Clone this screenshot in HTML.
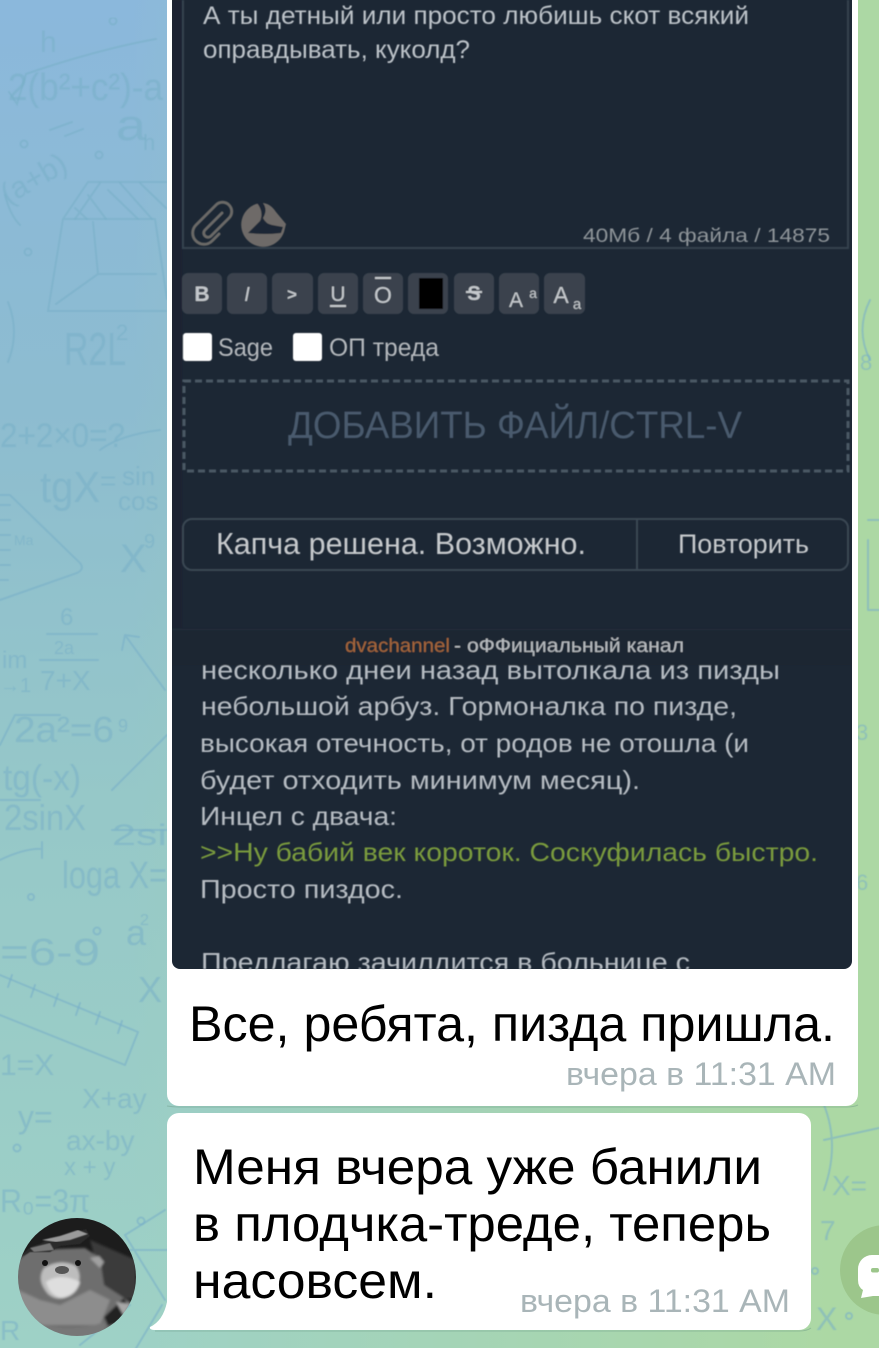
<!DOCTYPE html>
<html><head><meta charset="utf-8"><style>
html,body{margin:0;padding:0;width:879px;height:1348px;overflow:hidden;background:#97c8c8}
svg{display:block}
text{font-family:"Liberation Sans",sans-serif}
</style></head><body>
<svg width="879" height="1348" viewBox="0 0 879 1348" xmlns="http://www.w3.org/2000/svg">
<defs>
<linearGradient id="v" x1="0" y1="0" x2="0" y2="1"><stop offset="0" stop-color="#8bb8dc"/><stop offset=".3" stop-color="#8dbcd0"/><stop offset=".6" stop-color="#96c8c8"/><stop offset="1" stop-color="#9ed1c6"/></linearGradient>
<linearGradient id="h" x1="0" y1="0" x2="1" y2="0"><stop offset=".15" stop-color="#acd8a4" stop-opacity="0"/><stop offset=".95" stop-color="#acd8a4"/></linearGradient>
<filter id="b" x="0" y="0" width="1" height="1"><feGaussianBlur stdDeviation=".55"/></filter>
<filter id="s" x="-10%" y="-10%" width="120%" height="120%"><feGaussianBlur stdDeviation="1.4"/></filter>
<clipPath id="c1"><rect x="172" y="665" width="680" height="304"/></clipPath>
<clipPath id="av"><circle cx="77" cy="1277" r="59"/></clipPath>
</defs>
<rect width="879" height="1348" fill="url(#v)"/>
<rect width="879" height="1348" fill="url(#h)"/>

<g fill="none" stroke="#78afc8" stroke-width="2" stroke-linecap="round" stroke-opacity=".6" filter="url(#b)">
<path d="M9 92l8 12 9-30c40-14 90-28 130-35"/>
<path d="M63 219l-15 92h118M88 182l-25 37M155 219l12 80M88 182h78M63 219h92M93 222l5 52 58 0M98 274l-42 30"/>
<path d="M100 183l-25 36M120 183l32 36M140 183l26 25M108 190l30 29M88 195l18 24M75 208l12 11"/>
<path d="M8 302q12 30 0 60M5 195q5 20 15 30M50 130l22-8M65 136l18-7"/>
<path d="M10 495l70 68q5 6-3 10L0 600M10 495h-10M0 505h10M0 520h10M0 535h10M0 550h10M0 565h10M0 580h8"/>
<path d="M100 450q20-15 60-20M47 634h50M40 660h58M125 635l40 55M125 635l-3 15M125 635l14 2M0 745l15-30h45M0 800h40M112 830h55M112 790l55-55"/>
<path d="M0 860q25-12 42-11M42 842v16M0 975l138 57-13 33L0 1015"/>
<path d="M12 975l-4 12M35 985l-4 12M58 994l-4 12M80 1003l-4 12M100 1012l-4 12M122 1021l-4 12"/>
<path d="M132 1355l30-50M165 1300l-40-65 40-25M130 1250h40M125 1250l-45-30M80 1345l50-40"/>
<circle cx="113" cy="21" r="3.500"/><circle cx="24" cy="144" r="3.500"/><circle cx="99" cy="155" r="3.500"/><circle cx="28" cy="252" r="3.500"/><circle cx="31" cy="897" r="3"/><circle cx="97" cy="931" r="3.500"/><circle cx="17" cy="1148" r="3.500"/><circle cx="141" cy="1221" r="3.500"/>
<path d="M870 300q-15 30 0 60M824 1105q16 40 0 85M824 1140l55-12M868 520h11M868 540v70M868 610h11M860 1250l10-15"/>
<circle cx="815" cy="1271" r="3"/><circle cx="849" cy="1316" r="3"/>
</g>
<g fill="#79afc6" fill-opacity=".55" filter="url(#b)">
<text x="40" y="52" font-size="30">h</text>
<text x="8" y="100" font-size="38" textLength="155" lengthAdjust="spacingAndGlyphs">2(b²+c²)-a</text>
<text x="116" y="140" font-size="44" textLength="30" lengthAdjust="spacingAndGlyphs">a</text><text x="143" y="150" font-size="22">h</text>
<text x="8" y="205" font-size="30" transform="rotate(-30 8 205)">(a+b)</text>
<text x="64" y="365" font-size="46" textLength="62" lengthAdjust="spacingAndGlyphs">R2L</text><text x="116" y="340" font-size="22">2</text>
<text x="0" y="447" font-size="34" textLength="125" lengthAdjust="spacingAndGlyphs">2+2×0=?</text>
<text x="40" y="502" font-size="44" textLength="60" lengthAdjust="spacingAndGlyphs">tgX</text><text x="100" y="490" font-size="28">=</text>
<text x="122" y="485" font-size="26">sin</text><text x="118" y="510" font-size="26">cos</text>
<text x="14" y="545" font-size="14">Ma</text><text x="120" y="572" font-size="40">X</text><text x="144" y="548" font-size="20">9</text>
<text x="60" y="625" font-size="24">6</text><text x="54" y="654" font-size="18">2a</text><text x="40" y="690" font-size="28">7+X</text>
<text x="2" y="668" font-size="24">im</text><text x="0" y="692" font-size="20">→1</text>
<text x="14" y="742" font-size="36" textLength="100" lengthAdjust="spacingAndGlyphs">2a²=6</text><text x="118" y="732" font-size="18">9</text>
<text x="3" y="790" font-size="36" textLength="78" lengthAdjust="spacingAndGlyphs">tg(-x)</text>
<text x="4" y="830" font-size="36" textLength="82" lengthAdjust="spacingAndGlyphs">2sinX</text><text x="112" y="845" font-size="30" textLength="55" lengthAdjust="spacingAndGlyphs">2si</text>
<text x="62" y="888" font-size="38" textLength="105" lengthAdjust="spacingAndGlyphs">loga X=</text>
<text x="0" y="965" font-size="38" textLength="100" lengthAdjust="spacingAndGlyphs">=6-9</text><text x="126" y="945" font-size="36">a</text><text x="140" y="925" font-size="16">2</text>
<text x="138" y="1002" font-size="36">X</text><text x="0" y="1075" font-size="30">1=X</text>
<text x="18" y="1128" font-size="32">y=</text><text x="82" y="1108" font-size="28">X+ay</text><text x="66" y="1150" font-size="28">ax-by</text><text x="64" y="1175" font-size="24">x + y</text>
<text x="0" y="1212" font-size="32" textLength="90" lengthAdjust="spacingAndGlyphs">R₀=3π</text><text x="0" y="1340" font-size="28">R</text>
<text x="860" y="370" font-size="22">8</text><text x="856" y="740" font-size="22">3</text><text x="856" y="890" font-size="22">6</text><text x="832" y="1195" font-size="28">X=</text><text x="820" y="1240" font-size="28">7</text><text x="816" y="1330" font-size="32">X</text>
</g>

<!-- bubbles -->
<path d="M167 0H858V1094a12 12 0 0 1-12 12H179a12 12 0 0 1-12-12Z" fill="#fff"/>
<path d="M179 1113H799a12 12 0 0 1 12 12V1318a12 12 0 0 1-12 12H155q-6 0-5-3 13-6 17-25V1125a12 12 0 0 1 12-12Z" fill="#fff"/>
<path d="M167 1106q6 1 12 1H846q8 0 12-2" fill="none" stroke="#6b9a85" stroke-opacity=".45" stroke-width="1"/>
<path d="M155 1331H799q8 0 12-3" fill="none" stroke="#6b9a85" stroke-opacity=".45" stroke-width="1"/>

<!-- dark panel -->
<path d="M172 0H852V961a8 8 0 0 1-8 8H180a8 8 0 0 1-8-8Z" fill="#1c2734"/>
<g filter="url(#b)">
<rect x="172" y="0" width="10" height="660" fill="#1a2430"/>
<rect x="172" y="628" width="680" height="37" fill="#1b2633"/>
<rect x="172" y="629" width="680" height="1" fill="#212d3a"/>
<path d="M183 0V248H848V0" fill="none" stroke="#34434f" stroke-width="2"/>
<text x="203" y="24" font-size="25" fill="#bcc2c8" textLength="546" lengthAdjust="spacingAndGlyphs">А ты детный или просто любишь скот всякий</text>
<text x="203" y="58" font-size="25" fill="#bcc2c8" textLength="267" lengthAdjust="spacingAndGlyphs">оправдывать, куколд?</text>
<text x="583" y="242" font-size="19" fill="#8e9499" textLength="247" lengthAdjust="spacingAndGlyphs">40Мб / 4 файла / 14875</text>

<!-- clip icon -->
<path d="M222 213L205 230a4 4 0 0 0 6 6L229 218a9 9 0 0 0-13-13L196 225a11 11 0 0 0 16 16L219 234" fill="none" stroke="#6a6966" stroke-width="3" stroke-linecap="round"/>
<!-- sticker icon -->
<path d="M262 203Q270 203 276 212L286 224 284 232A22 22 0 1 1 256 204Z" fill="#6e6a67"/>
<path d="M248 233L263 218Q266 224 272 225L283 227 281 233Q265 235 248 233Z" fill="#1c2734"/>
<path d="M257 203Q264 212 260 221L263 218Q268 210 263 203Z" fill="#1c2734"/>

<!-- toolbar -->
<g fill="#3a434d">
<rect x="182" y="273" width="40" height="41" rx="6"/><rect x="227" y="273" width="40" height="41" rx="6"/><rect x="272" y="273" width="41" height="41" rx="6"/><rect x="318" y="273" width="40" height="41" rx="6"/><rect x="363" y="273" width="40" height="41" rx="6"/><rect x="408" y="273" width="40" height="41" rx="6"/><rect x="454" y="273" width="40" height="41" rx="6"/><rect x="499" y="273" width="40" height="41" rx="6"/><rect x="544" y="273" width="41" height="41" rx="6"/>
</g>
<rect x="419" y="278" width="24" height="31" fill="#000"/>
<g fill="#c4c8cc" text-anchor="middle">
<text x="202" y="301" font-size="21" font-weight="700">B</text>
<text x="247" y="301" font-size="20" font-style="italic">I</text>
<text x="292" y="300" font-size="17" font-weight="700">&gt;</text>
<text x="338" y="301" font-size="21">U</text><rect x="330" y="305" width="16" height="2"/>
<text x="383" y="303" font-size="23">O</text><rect x="375" y="277" width="16" height="2"/>
<text x="474" y="300" font-size="20" font-weight="700">S</text><rect x="466" y="291" width="16" height="2"/>
<text x="516" y="307" font-size="21">A</text><text x="533" y="298" font-size="14">a</text>
<text x="561" y="303" font-size="23">A</text><text x="577" y="309" font-size="15">a</text>
</g>
<rect x="183" y="333" width="29" height="28" rx="3" fill="#fff"/>
<rect x="293" y="333" width="29" height="28" rx="3" fill="#fff"/>
<text x="218" y="356" font-size="25" fill="#b4b8bc" textLength="55" lengthAdjust="spacingAndGlyphs">Sage</text>
<text x="329" y="356" font-size="25" fill="#b4b8bc" textLength="110" lengthAdjust="spacingAndGlyphs">ОП треда</text>

<!-- dropzone -->
<rect x="184" y="381" width="664" height="90" fill="none" stroke="#4b5865" stroke-width="3" stroke-dasharray="7 4"/>
<text x="288" y="438" font-size="38" fill="#4a5a6d" textLength="454" lengthAdjust="spacingAndGlyphs">ДОБАВИТЬ ФАЙЛ/CTRL-V</text>

<!-- captcha -->
<rect x="183" y="519" width="665" height="51" rx="9" fill="none" stroke="#3a4753" stroke-width="2"/>
<rect x="636" y="519" width="2" height="51" fill="#3a4753"/>
<text x="216" y="554" font-size="31" fill="#c6c9cc" textLength="370" lengthAdjust="spacingAndGlyphs">Капча решена. Возможно.</text>
<text x="678" y="553" font-size="27" fill="#c6c9cc" textLength="131" lengthAdjust="spacingAndGlyphs">Повторить</text>

<!-- channel -->
<text x="345" y="652" font-size="19" fill="#a5663a" textLength="105" lengthAdjust="spacingAndGlyphs">dvachannel</text>
<text x="454" y="652" font-size="19" fill="#b8bcc0" textLength="230" lengthAdjust="spacingAndGlyphs">- оФФициальный канал</text>

<g clip-path="url(#c1)" font-size="26" fill="#b6bcc2">
<text x="201" y="679" textLength="579" lengthAdjust="spacingAndGlyphs">несколько дней назад вытолкала из пизды</text>
<text x="201" y="715" textLength="536" lengthAdjust="spacingAndGlyphs">небольшой арбуз. Гормоналка по пизде,</text>
<text x="200" y="752" textLength="549" lengthAdjust="spacingAndGlyphs">высокая отечность, от родов не отошла (и</text>
<text x="200" y="789" textLength="440" lengthAdjust="spacingAndGlyphs">будет отходить минимум месяц).</text>
<text x="200" y="825" textLength="197" lengthAdjust="spacingAndGlyphs">Инцел с двача:</text>
<text x="200" y="861" fill="#7a9b3c" textLength="618" lengthAdjust="spacingAndGlyphs">&gt;&gt;Ну бабий век короток. Соскуфилась быстро.</text>
<text x="200" y="898" textLength="203" lengthAdjust="spacingAndGlyphs">Просто пиздос.</text>
<text x="201" y="971" textLength="489" lengthAdjust="spacingAndGlyphs">Предлагаю зачилдится в больнице с</text>
</g>
</g>

<!-- white bubble text -->
<text x="189" y="1041" font-size="50" fill="#000" textLength="646" lengthAdjust="spacingAndGlyphs">Все, ребята, пизда пришла.</text>
<text x="566" y="1085" font-size="32" fill="#a9b5b8" textLength="270" lengthAdjust="spacingAndGlyphs">вчера в 11:31 AM</text>
<text x="193" y="1184" font-size="50" fill="#000" textLength="569" lengthAdjust="spacingAndGlyphs">Меня вчера уже банили</text>
<text x="193" y="1241" font-size="50" fill="#000" textLength="578" lengthAdjust="spacingAndGlyphs">в плодчка-треде, теперь</text>
<text x="193" y="1298" font-size="50" fill="#000" textLength="244" lengthAdjust="spacingAndGlyphs">насовсем.</text>
<text x="520" y="1312" font-size="32" fill="#a9b5b8" textLength="270" lengthAdjust="spacingAndGlyphs">вчера в 11:31 AM</text>

<!-- avatar -->
<g clip-path="url(#av)">
<rect x="18" y="1218" width="118" height="118" fill="#1c1c1c"/>
<g filter="url(#s)">
<path d="M90 1240L136 1260V1300L105 1295Z" fill="#3a3a3a"/>
<path d="M16 1262L30 1250 85 1248 100 1258 104 1285 135 1305 118 1340H30L16 1300Z" fill="#6e6e6e"/>
<path d="M18 1290L40 1300 60 1305 90 1290 110 1300 100 1325 40 1325 22 1315Z" fill="#8d8d8d"/>
<path d="M30 1320Q65 1335 105 1322V1340H30Z" fill="#777"/>
<path d="M44 1268Q60 1258 76 1266 84 1278 74 1292 60 1304 48 1294 36 1280 44 1268Z" fill="#bdbdbd"/>
<path d="M46 1282Q60 1272 80 1282 76 1296 62 1298 50 1296 46 1282Z" fill="#dedede"/>
<path d="M100 1268L104 1262 99 1256 90 1258Z" fill="#a0a0a0"/>
<path d="M104 1317L124 1298 130 1310 122 1322 108 1326Z" fill="#222"/>
<path d="M116 1302L130 1304 124 1316Z" fill="#a8a8a8"/>
</g>
<path d="M23 1256Q28 1246 40 1244L50 1238 70 1234 86 1229 90 1236 80 1244 60 1246 50 1252 30 1252Z" fill="#2a2a2a" filter="url(#b)"/>
<path d="M42 1240L60 1236 78 1230 88 1234 70 1240 56 1242Z" fill="#9a9a9a" filter="url(#b)"/>
<path d="M30 1248L50 1243 54 1250 34 1252Z" fill="#777" filter="url(#b)"/>
<circle cx="45" cy="1263" r="3" fill="#111"/><circle cx="78" cy="1263" r="3" fill="#111"/>
<ellipse cx="62" cy="1270" rx="7" ry="4" fill="#555"/>
</g>

<!-- FAB -->
<circle cx="885" cy="1270" r="45" fill="#9cc68b"/>
<path d="M879 1255H872A14 14 0 0 0 858 1269V1280Q858 1287 863 1290L861 1298 873 1296H879Z" fill="#fff"/>
<rect x="871" y="1268" width="8" height="4.500" rx="2" fill="#9cc68b"/>
</svg>
</body></html>
